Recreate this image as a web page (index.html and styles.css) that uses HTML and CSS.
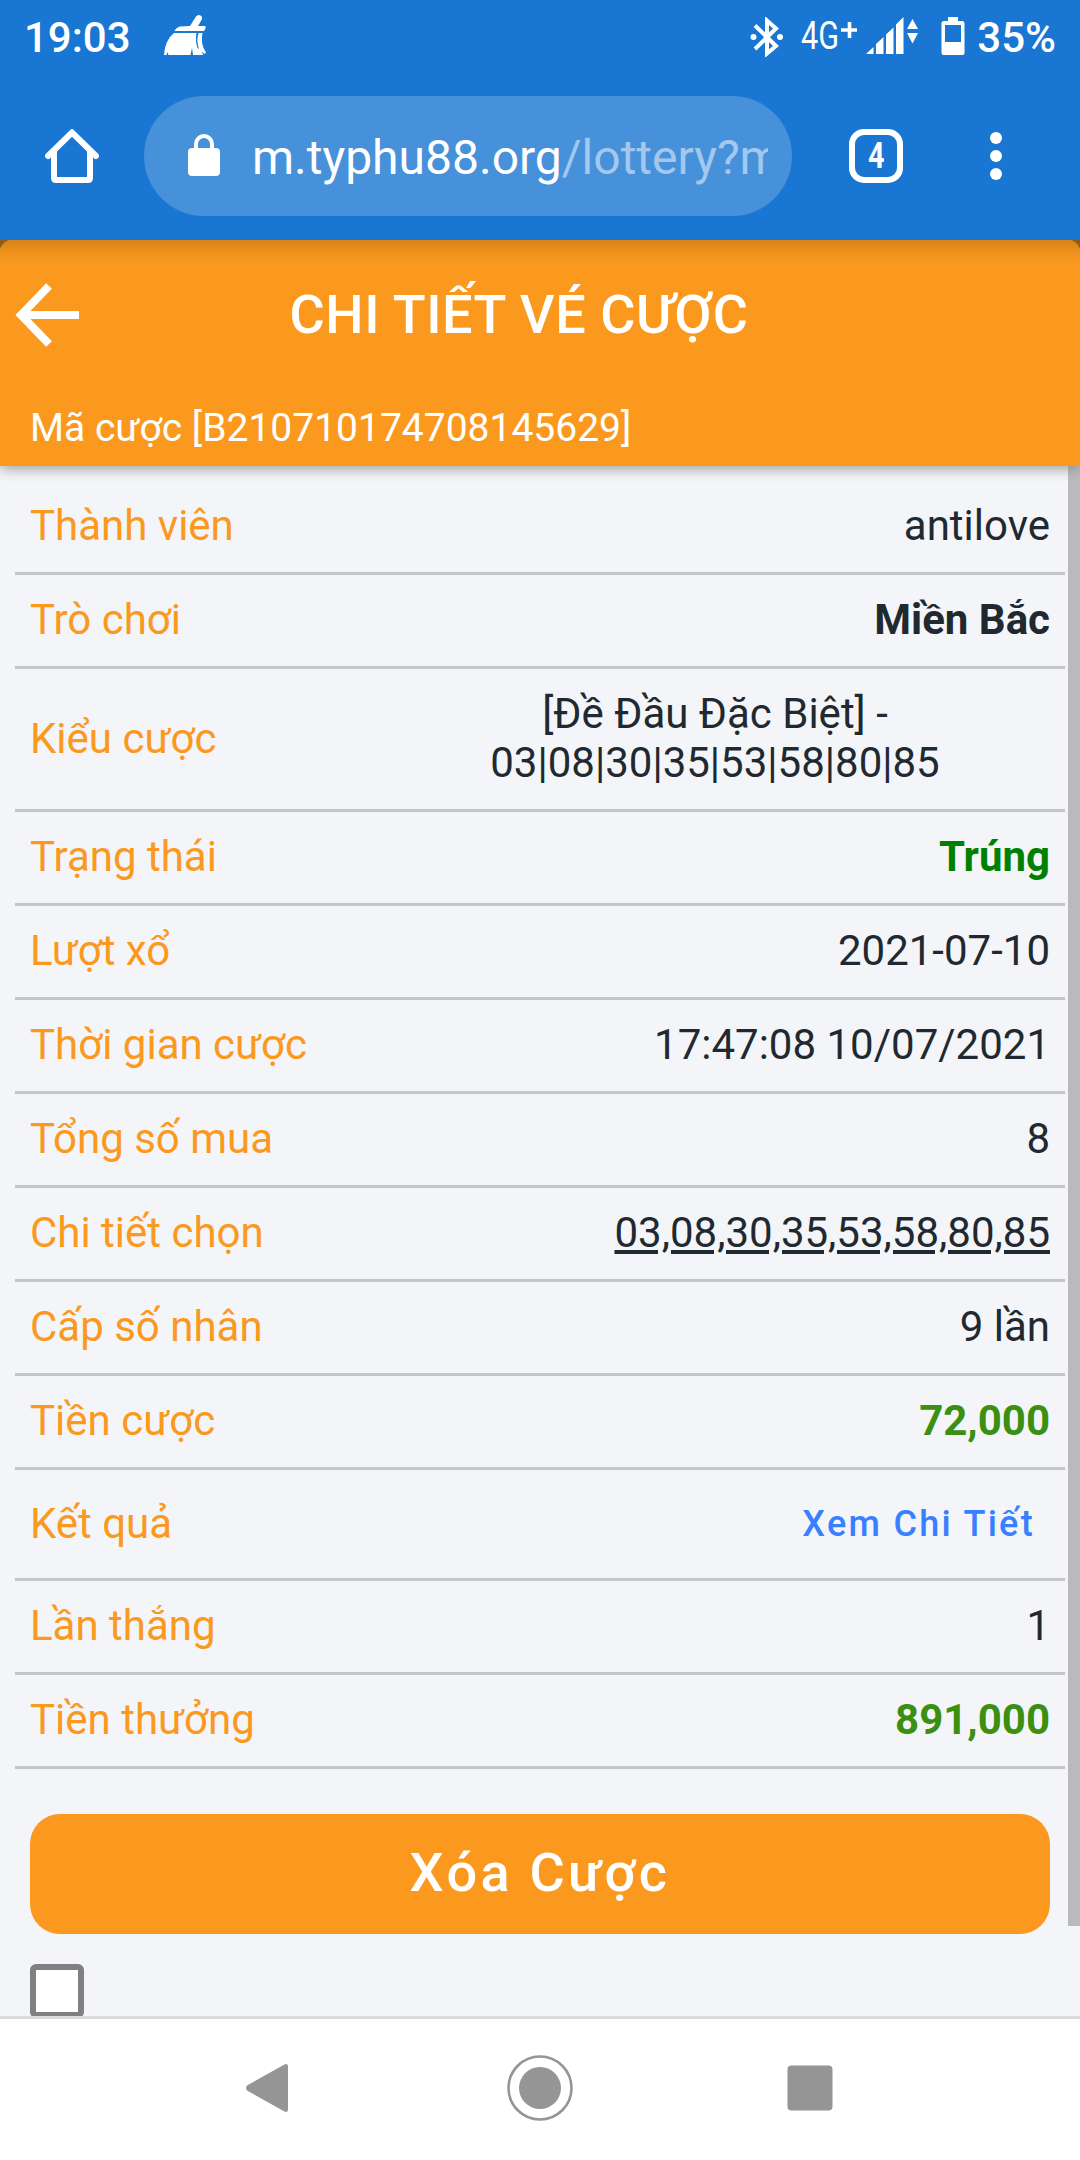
FILE: index.html
```html
<!DOCTYPE html>
<html lang="vi">
<head>
    <meta charset="UTF-8">
    <meta name="viewport" content="width=device-width, initial-scale=1.0">
    <title>Chi tiết vé cược</title>
    <link rel="stylesheet" href="styles.css">
</head>
<body>
    <div class="phone">
        <div class="status-bar">
            <span class="clock">19:03</span>
            <svg class="broom" width="44" height="44" viewBox="0 0 44 44" fill="#fff">
                <path d="M26 12 L32 2.5 Q34 0 36.500 1.500 Q39 3 37.500 6 L34 12 H41.500 V14.500 L40 17 H10.500 Q12 13.500 16 12.500 Z"/>
                <path d="M10 19 H32.500 Q31 27 33.500 34 L35 35 Q32 27 34.500 19 H38.500 Q36 30 42 38.500 L40.500 40 L38 37.500 L39 41 H29 L28 34 L26.500 41 H4.500 L3.500 38 L2.500 41 H0 Q1 26 10 19 Z"/>
            </svg>
            <div class="status-icons">
                <svg class="bluetooth" width="34" height="40" viewBox="0 0 34 40">
                    <path d="M5 8.500 L26 29 L17 36.500 V3.500 L26 11.500 L5 32" fill="none" stroke="#fff" stroke-width="4"/>
                    <circle cx="3.500" cy="20" r="3" fill="#fff"/>
                    <circle cx="30" cy="20" r="3" fill="#fff"/>
                </svg>
                <svg class="network" width="58" height="44" viewBox="0 0 58 44">
                    <text x="0" y="35" textLength="38" lengthAdjust="spacingAndGlyphs">4G</text>
                    <path d="M48.500 8 V24 M40 16 H56" stroke="#fff" stroke-width="3.600"/>
                </svg>
                <svg class="signal" width="54" height="40" viewBox="0 0 54 40" fill="#fff">
                    <path d="M0 38 L7.500 31 V38 Z M10 38 V28 L17.500 21 V38 Z M20 38 V18.500 L27.500 11.500 V38 Z M30 38 V8.500 L37.500 1 V38 Z"/>
                    <path d="M41 13 L46.500 3 L52 13 Z M41 17 H52 L46.500 27.500 Z"/>
                </svg>
                <svg class="battery" width="24" height="40" viewBox="0 0 24 40">
                    <path fill="#fff" fill-rule="evenodd" d="M7 1 H17 V5 H21 Q23.500 5 23.500 7.500 V37 Q23.500 39 21.500 39 H2.500 Q.5 39 .5 37 V7.500 Q.5 5 3 5 H7 Z M4 9 V26 H20 V9 Z"/>
                </svg>
                <span class="percent">35%</span>
            </div>
        </div>

        <div class="browser-bar">
            <svg class="home" width="54" height="54" viewBox="0 0 54 54" fill="none" stroke="#fff" stroke-width="6" stroke-linejoin="round" stroke-linecap="round">
                <path d="M3 27 L27 3.500 L51 27" stroke-linejoin="miter"/>
                <path d="M9 23 V49 Q9 51 11 51 H43 Q45 51 45 49 V23"/>
            </svg>
            <div class="address">
                <svg class="lock" width="32" height="42" viewBox="0 0 32 42">
                    <rect x="0" y="14" width="32" height="28" rx="4" fill="#fff"/>
                    <path d="M8 16 V10 A8 8 0 0 1 24 10 V16" fill="none" stroke="#fff" stroke-width="4"/>
                </svg>
                <div class="url">m.typhu88.org<span class="path">/lottery?m</span></div>
            </div>
            <div class="tabs"><span>4</span></div>
            <svg class="dots" width="12" height="48" viewBox="0 0 12 48" fill="#fff">
                <circle cx="6" cy="6" r="6"/>
                <circle cx="6" cy="24" r="6"/>
                <circle cx="6" cy="42" r="6"/>
            </svg>
        </div>

        <div class="page">
            <header>
                <div class="title-bar">
                    <svg class="back" width="64" height="66" viewBox="0 0 64 66" fill="none" stroke="#fff" stroke-width="8">
                        <path d="M34 4 L6 33 L34 62 M8 33 H64"/>
                    </svg>
                    <h1>CHI TIẾT VÉ CƯỢC</h1>
                </div>
                <div class="bet-code">Mã cược [B210710174708145629]</div>
            </header>

            <main>
                <ul class="details">
                    <li><label>Thành viên</label><span>antilove</span></li>
                    <li><label>Trò chơi</label><span class="bold">Miền Bắc</span></li>
                    <li class="tall"><label>Kiểu cược</label><span class="bet-type">[Đề Đầu Đặc Biệt] -<br>03|08|30|35|53|58|80|85</span></li>
                    <li><label>Trạng thái</label><span class="bold win">Trúng</span></li>
                    <li><label>Lượt xổ</label><span>2021-07-10</span></li>
                    <li><label>Thời gian cược</label><span>17:47:08 10/07/2021</span></li>
                    <li><label>Tổng số mua</label><span>8</span></li>
                    <li><label>Chi tiết chọn</label><span class="underline">03,08,30,35,53,58,80,85</span></li>
                    <li><label>Cấp số nhân</label><span>9 lần</span></li>
                    <li><label>Tiền cược</label><span class="bold money">72,000</span></li>
                    <li class="result"><label>Kết quả</label><a class="link">Xem Chi Tiết</a></li>
                    <li><label>Lần thắng</label><span>1</span></li>
                    <li><label>Tiền thưởng</label><span class="bold money">891,000</span></li>
                </ul>
                <button class="delete">Xóa Cược</button>
                <div class="checkbox"></div>
            </main>
            <div class="scrollbar"></div>
        </div>

        <div class="nav-bar">
            <svg width="66" height="66" viewBox="0 0 66 66" fill="#959595">
                <path d="M10 30.500 L47.500 9.500 Q51 8 51 12 V54 Q51 58 47.500 56.500 L10 35.500 Q8 33 10 30.500 Z"/>
            </svg>
            <svg width="66" height="66" viewBox="0 0 66 66">
                <circle cx="33" cy="33" r="31.500" fill="none" stroke="#959595" stroke-width="2.600"/>
                <circle cx="33" cy="33" r="21" fill="#959595"/>
            </svg>
            <svg width="66" height="66" viewBox="0 0 66 66">
                <rect x="10.500" y="10.500" width="45" height="45" rx="4" fill="#959595"/>
            </svg>
        </div>
    </div>
</body>
</html>
```
FILE: styles.css
```css
* {
    box-sizing: border-box;
}

body {
    margin: 0;
    font-family: Roboto, sans-serif;
    color: #212930;
    background-color: #fff;
}

svg {
    display: block;
    flex-shrink: 0;
}

.phone {
    width: 1080px;
    height: 2160px;
    overflow: hidden;
    display: flex;
    flex-direction: column;
}

/* status bar */
.status-bar {
    height: 72px;
    display: flex;
    align-items: center;
    padding: 2px 24px 0 24px;
    background-color: #1976d2;
    color: #fff;
    font-size: 42px;
    font-weight: 500;
}

.clock {
    width: 140px;
}

.broom {
    margin-bottom: 2px;
}

.status-icons {
    margin-left: auto;
    display: flex;
    align-items: center;
}

.bluetooth {
    margin-bottom: 1px;
}

.network {
    margin-left: 17px;
    margin-bottom: 2px;
}

.network text {
    font-size: 38px;
    font-weight: 400;
    fill: #fff;
}

.signal {
    margin-left: 7px;
    margin-bottom: 2px;
}

.battery {
    margin: 0 12px 3px 21px;
}

/* browser toolbar */
.browser-bar {
    height: 168px;
    display: flex;
    align-items: center;
    padding: 0 78px 0 45px;
    background-color: #1976d2;
    color: #fff;
}

.address {
    width: 648px;
    height: 120px;
    margin-left: 45px;
    padding: 0 24px 0 44px;
    display: flex;
    align-items: center;
    border-radius: 60px;
    background-color: #4791db;
}

.lock {
    margin-bottom: 2px;
}

.url {
    margin-left: 32px;
    padding-top: 2px;
    flex: 1;
    overflow: hidden;
    white-space: nowrap;
    font-size: 48px;
}

.path {
    color: #a3c8ed;
}

.tabs {
    width: 54px;
    height: 54px;
    margin-left: 57px;
    display: flex;
    align-items: center;
    justify-content: center;
    border: 6px solid #fff;
    border-radius: 15px;
    font-size: 36px;
    font-weight: 700;
}

.tabs span {
    transform: scaleX(0.8);
}

.dots {
    margin-left: auto;
}

/* page */
.page {
    position: relative;
    height: 1776px;
    overflow: hidden;
    background-color: #f4f5f9;
}

header {
    position: relative;
    height: 226px;
    background-color: #fa991e;
    box-shadow: 0 3px 12px rgba(0, 0, 0, 0.35);
    color: #fff;
}

/* dark rounded corners and the toolbar shadow */
header::before {
    content: "";
    position: absolute;
    inset: 0 0 auto 0;
    height: 24px;
    background:
        radial-gradient(circle at 13px 13px, transparent 13px, #955b12 14px) 0 0 / 13px 13px no-repeat,
        radial-gradient(circle at 0 13px, transparent 13px, #955b12 14px) 100% 0 / 13px 13px no-repeat,
        linear-gradient(rgba(0, 0, 0, 0.14), rgba(0, 0, 0, 0.04) 60%, transparent);
}

.title-bar {
    height: 150px;
    display: flex;
    align-items: center;
    padding-left: 15px;
}

h1 {
    width: 880px;
    margin: 0;
    padding-bottom: 2px;
    text-align: center;
    font-size: 54px;
    font-weight: 500;
    letter-spacing: 0.54px;
}

.bet-code {
    height: 76px;
    padding-left: 30px;
    line-height: 76px;
    font-size: 39px;
}

main {
    padding: 15px 15px 0;
}

.details {
    list-style: none;
    margin: 0;
    padding: 0;
    font-size: 42px;
    line-height: 49px;
}

.details li {
    height: 94px;
    display: flex;
    align-items: center;
    justify-content: space-between;
    padding: 0 15px 2px;
    border-bottom: 3px solid #c5c6c9;
}

.details .tall {
    height: 143px;
}

.details .result {
    height: 111px;
}

.details label {
    color: #fa991e;
}

.bet-type {
    width: 670px;
    text-align: center;
}

.bold {
    font-weight: 700;
}

.win {
    color: #008000;
}

.money {
    color: #3b8f11;
}

.underline {
    text-decoration: underline;
}

.link {
    padding: 2px 15px 0 0;
    color: #3880ff;
    font-size: 36px;
    font-weight: 500;
    letter-spacing: 2.3px;
}

.delete {
    display: block;
    width: 1020px;
    height: 120px;
    margin: 45px 15px 30px;
    padding: 0 0 3px;
    border: none;
    border-radius: 30px;
    background-color: #fa991e;
    color: #fff;
    font-family: inherit;
    font-size: 54px;
    font-weight: 500;
    letter-spacing: 3.3px;
}

.checkbox {
    width: 54px;
    height: 54px;
    margin-left: 15px;
    border: 6px solid #808080;
    border-radius: 6px;
    background-color: #fff;
}

.scrollbar {
    position: absolute;
    top: 226px;
    right: 0;
    width: 12px;
    height: 1460px;
    background-color: rgba(128, 128, 128, 0.5);
}

/* android navigation */
.nav-bar {
    height: 144px;
    display: flex;
    align-items: center;
    justify-content: center;
    gap: 204px;
    padding-bottom: 3px;
    border-top: 3px solid #d9dade;
    background-color: #fff;
}
```
